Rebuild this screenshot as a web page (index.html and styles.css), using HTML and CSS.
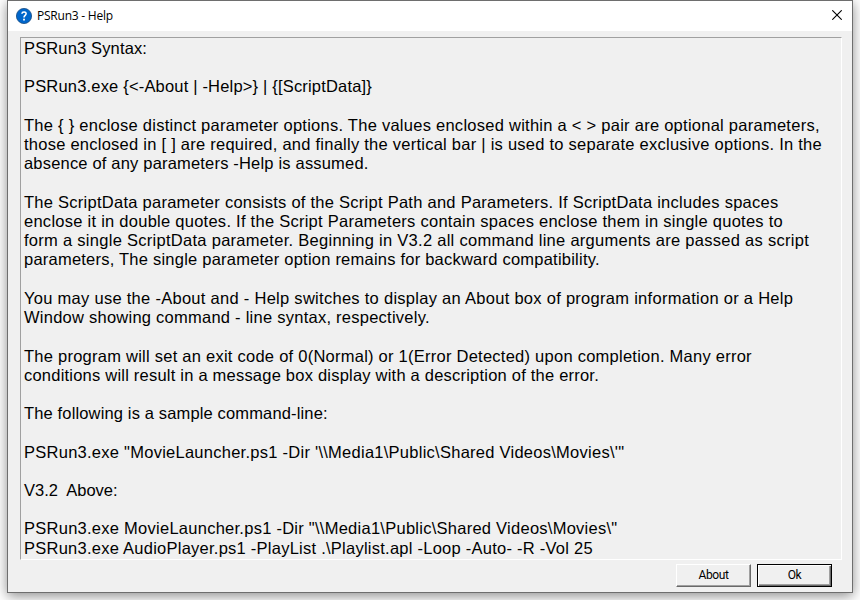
FILE: index.html
```html
<!DOCTYPE html>
<html lang="en">
<head>
<meta charset="utf-8">
<title>PSRun3 - Help</title>
<link rel="stylesheet" href="styles.css">
</head>
<body>
<main class="window">
  <header class="titlebar">
    <svg class="app-icon" width="16" height="16" viewBox="0 0 16 16">
      <circle cx="8" cy="8" r="7.6" fill="#0066cb" stroke="#174b80" stroke-width=".8"/>
      <path d="M5.9 5.7C6.1 3.3 10.2 3.4 10.1 5.8C10 7.3 8 7.4 8 9.4" fill="none" stroke="#fff" stroke-width="1.6"/>
      <rect x="7.1" y="10.7" width="1.8" height="1.8" fill="#fff"/>
    </svg>
    <h1 class="title">PSRun3 - Help</h1>
    <svg class="close" width="10" height="10" viewBox="0 0 10 10">
      <path d="M.3.3 9.7 9.7M9.7.3.3 9.7" stroke="#000" stroke-width="1.1"/>
    </svg>
  </header>
  <section class="help">
    <p><span class="t15">PSRun3 Syntax:</span></p>
    <p><span class="t18">PSRun3.exe {&lt;-About | -Help&gt;} | {[ScriptData]}</span></p>
    <p><span class="t26">The { } enclose distinct parameter options. The values enclosed within a &lt; &gt; pair are optional parameters,</span>
    <span class="t25">those enclosed in [ ] are required, and finally the vertical bar | is used to separate exclusive options. In the</span>
    <span class="t19">absence of any parameters -Help is assumed.</span></p>
    <p><span class="t26">The ScriptData parameter consists of the Script Path and Parameters. If ScriptData includes spaces</span>
    <span class="t26">enclose it in double quotes. If the Script Parameters contain spaces enclose them in single quotes to</span>
    <span class="t28">form a single ScriptData parameter. Beginning in V3.2 all command line arguments are passed as script</span>
    <span class="t23">parameters, The single parameter option remains for backward compatibility.</span></p>
    <p><span class="t28">You may use the -About and - Help switches to display an About box of program information or a Help</span>
    <span class="t25">Window showing command - line syntax, respectively.</span></p>
    <p><span class="t25">The program will set an exit code of 0(Normal) or 1(Error Detected) upon completion. Many error</span>
    <span class="t22">conditions will result in a message box display with a description of the error.</span></p>
    <p><span class="t15">The following is a sample command-line:</span></p>
    <p><span class="t26">PSRun3.exe "MovieLauncher.ps1 -Dir '\\Media1\Public\Shared Videos\Movies\'"</span></p>
    <p><span class="t0">V3.2  Above:</span></p>
    <p><span class="t26">PSRun3.exe MovieLauncher.ps1 -Dir "\\Media1\Public\Shared Videos\Movies\"</span>
    <span class="t25">PSRun3.exe AudioPlayer.ps1 -PlayList .\Playlist.apl -Loop -Auto- -R -Vol 25</span></p>
  </section>
  <footer class="actions">
    <button class="btn">About</button>
    <button class="btn default"><span>Ok</span></button>
  </footer>
</main>
</body>
</html>
```
FILE: styles.css
```css
* { box-sizing: border-box; }
html { height: 100%; overflow: hidden; background: #fff; }
body { margin: 0; height: 600px; padding: 0 7px 7px; overflow: hidden; }
.window {
  height: 593px;
  display: flex;
  flex-direction: column;
  background: #f0f0f0;
  border: 1px solid #6e6e6e;
  box-shadow: 0 3px 12px rgba(0, 0, 0, .45);
}
.titlebar {
  height: 30px;
  flex: none;
  display: flex;
  align-items: center;
  padding: 0 10px 1px 8px;
  background: #fff;
}
.title {
  flex: 1;
  margin: 1px 0 0 5px;
  font: 400 12px/16px "Open Sans", sans-serif;
  letter-spacing: -.23px;
  color: #000;
}
.close { margin-bottom: 1px; }
.help {
  height: 523px;
  flex: none;
  margin: 6px 10px 0 12px;
  padding: 1px 0 0 3px;
  border: 1px solid #a0a0a0;
  border-right-color: #fff;
  border-bottom-color: #fff;
  font: 16.5px/19.22px "Liberation Sans", Arial, sans-serif;
  color: #000;
  overflow: hidden;
}
.help p { margin: 0 0 19.22px; }
.help span { display: block; white-space: pre; }
.t0 { letter-spacing: 0; }
.t15 { letter-spacing: .145px; }
.t18 { letter-spacing: .181px; }
.t19 { letter-spacing: .185px; }
.t22 { letter-spacing: .217px; }
.t23 { letter-spacing: .226px; }
.t25 { letter-spacing: .248px; }
.t26 { letter-spacing: .259px; }
.t28 { letter-spacing: .281px; }
.actions { display: flex; justify-content: flex-end; gap: 6px; padding: 4px 20px 0 0; }
.btn {
  width: 75px;
  height: 23px;
  padding: 0 0 1px;
  border: 1px solid;
  border-color: #fff #696969 #696969 #fff;
  box-shadow: inset -1px -1px #a0a0a0;
  background: #f0f0f0;
  font: 12px/18px Roboto, sans-serif;
  color: #000;
  letter-spacing: -.4px;
}
.btn.default {
  border-color: #000;
  box-shadow: inset 1px 1px #fff, inset -1px -1px #696969, inset -2px -2px #a0a0a0;
}
```
